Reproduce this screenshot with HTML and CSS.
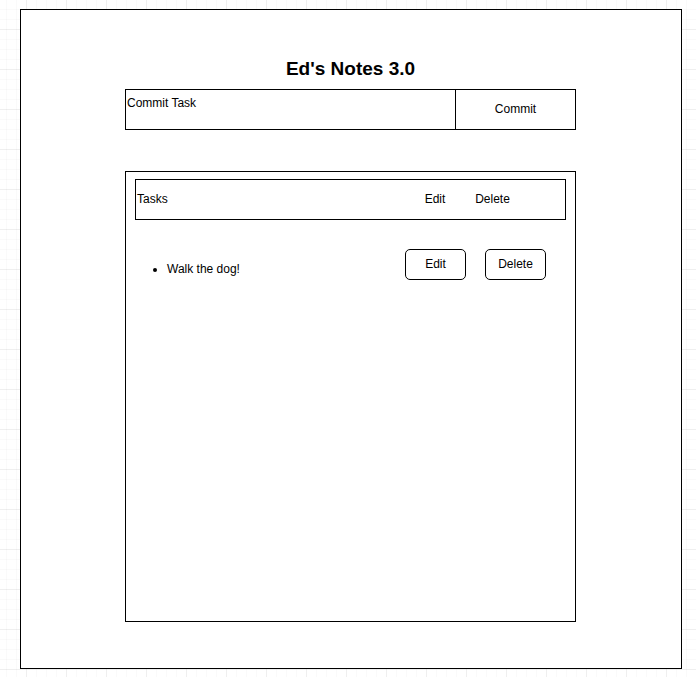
FILE: index.html
```html
<!DOCTYPE html>
<html>
<head>
<meta charset="utf-8">
<link rel="stylesheet" href="styles.css">
</head>
<body>
<div class="frame">
  <h1 class="title">Ed's Notes 3.0</h1>
  <div class="commit-bar">
    <div class="commit-input">Commit Task</div>
    <div class="commit-btn">Commit</div>
  </div>
  <div class="tasks-panel">
    <div class="tasks-header">
      <span class="tasks-label">Tasks</span>
      <span class="hdr-edit">Edit</span>
      <span class="hdr-delete">Delete</span>
    </div>
    <div class="task-row">
      <ul class="task-list"><li>Walk the dog!</li></ul>
      <div class="btn btn-edit">Edit</div>
      <div class="btn btn-delete">Delete</div>
    </div>
  </div>
</div>
</body>
</html>
```

FILE: styles.css
```css
html, body {
  margin: 0;
  padding: 0;
}
body {
  width: 696px;
  height: 677px;
  font-family: "Liberation Sans", Arial, sans-serif;
  font-size: 12px;
  color: #000;
  background-color: #fff;
  background-image:
    linear-gradient(to right, rgba(0,0,0,0.045) 1px, transparent 1px),
    linear-gradient(to bottom, rgba(0,0,0,0.045) 1px, transparent 1px),
    linear-gradient(to right, rgba(0,0,0,0.02) 1px, transparent 1px),
    linear-gradient(to bottom, rgba(0,0,0,0.02) 1px, transparent 1px);
  background-size: 40px 40px, 40px 40px, 10px 10px, 10px 10px;
  background-position: 26px 29px, 26px 29px, 6px 9px, 6px 9px;
  padding-top: 9px;
  box-sizing: border-box;
  overflow: hidden;
}
.frame {
  margin-left: 20px;
  width: 662px;
  height: 660px;
  border: 1px solid #000;
  box-sizing: border-box;
  background: #fff;
  padding-left: 104px;
  padding-top: 47px;
}
.title {
  margin: 0;
  width: 451px;
  text-align: center;
  font-size: 19px;
  font-weight: bold;
  line-height: 24px;
  height: 24px;
}
.commit-bar {
  margin-top: 8px;
  width: 451px;
  height: 41px;
  border: 1px solid #000;
  box-sizing: border-box;
  display: flex;
}
.commit-input {
  width: 328px;
  border-right: 1px solid #000;
  padding: 6px 0 0 1px;
  line-height: 14px;
}
.commit-btn {
  flex: 1;
  display: flex;
  align-items: center;
  justify-content: center;
  padding-bottom: 2px;
}
.tasks-panel {
  margin-top: 41px;
  width: 451px;
  height: 451px;
  border: 1px solid #000;
  box-sizing: border-box;
  padding: 7px 9px 0 9px;
}
.tasks-header {
  height: 41px;
  border: 1px solid #000;
  box-sizing: border-box;
  display: flex;
  align-items: center;
  padding-left: 1px;
  padding-bottom: 1px;
}
.tasks-label {
  width: 278px;
}
.hdr-edit {
  width: 40px;
  text-align: center;
}
.hdr-delete {
  width: 75px;
  text-align: center;
}
.task-row {
  display: flex;
  align-items: flex-start;
  margin-top: 29px;
  padding-left: 9px;
}
.task-list {
  margin: 13px 0 0 0;
  padding-left: 23px;
  width: 238px;
  line-height: 14px;
}
.btn {
  height: 31px;
  width: 61px;
  border: 1px solid #000;
  border-radius: 5px;
  box-sizing: border-box;
  display: flex;
  align-items: center;
  justify-content: center;
  padding-bottom: 1px;
}
.btn-delete {
  margin-left: 19px;
}
```
